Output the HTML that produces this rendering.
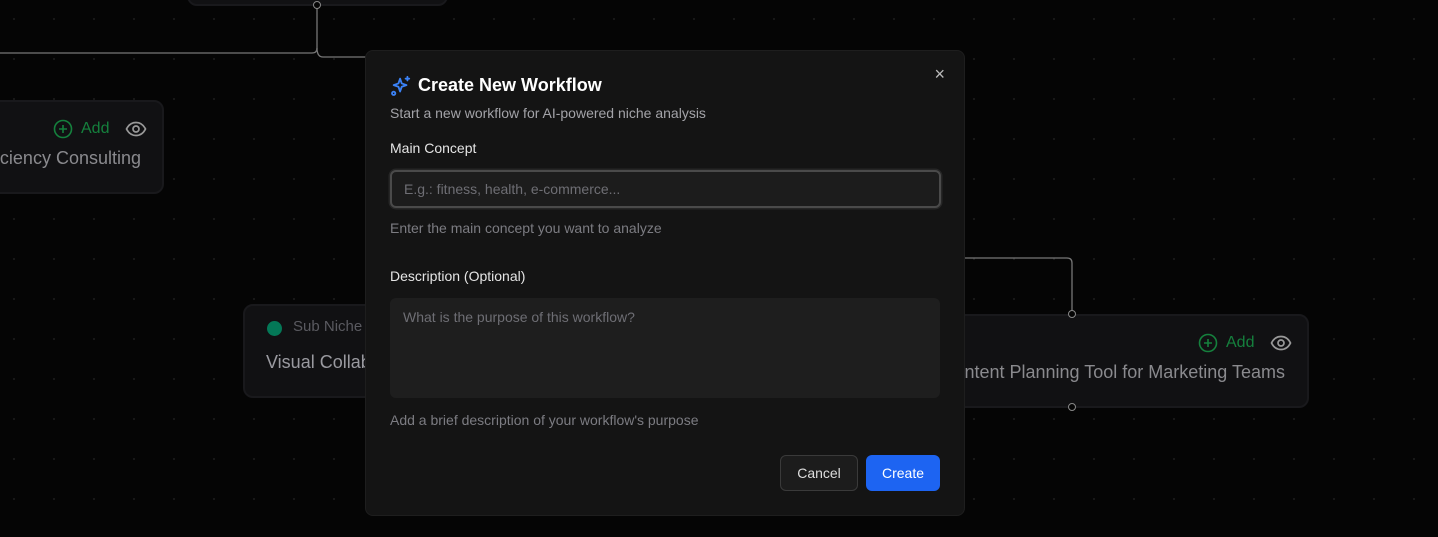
<!DOCTYPE html>
<html><head><style>
body{margin:0;width:1438px;height:537px;overflow:hidden;background:#050505;font-family:"Liberation Sans",sans-serif;position:relative}
.grid{position:absolute;inset:0;background-image:radial-gradient(circle,#222 0.7px,transparent 1.1px);background-size:40px 40px;background-position:-6px -1px}
.node{position:absolute;background:#111113;border:2px solid #19191c;border-radius:10px;box-sizing:border-box}
.add{position:absolute;color:#15803d;font-size:16px;display:flex;align-items:center;gap:8px}
.title{position:absolute;color:#8a8a8e;font-size:18px;white-space:nowrap}
.h{position:absolute;width:6px;height:6px;border:1.5px solid #888;border-radius:50%;background:#050505}
.modal{position:absolute;left:365px;top:50px;width:600px;height:466px;background:#141414;border:1px solid #1e1e1e;border-radius:8px;box-sizing:border-box}
.lbl{position:absolute;left:24px;color:#e5e5e5;font-size:14px}
.hint{position:absolute;left:24px;color:#7c7c82;font-size:14px}
</style></head><body>
<div class="grid"></div>
<svg width="1438" height="537" style="position:absolute;left:0;top:0">
<path d="M317 5 V48 Q317 53 312 53 H0" stroke="#777" fill="none" stroke-width="1.3"/>
<path d="M317 48 Q317 57 323 57 H366" stroke="#777" fill="none" stroke-width="1.3"/>
<path d="M965 258 H1067 Q1072 258 1072 263 V314" stroke="#777" fill="none" stroke-width="1.3"/>
</svg>
<div class="node" style="left:187px;top:-40px;width:261px;height:46px"></div>
<div class="h" style="left:313px;top:1px"></div>
<div class="node" style="left:-20px;top:100px;width:184px;height:94px">
<div class="add" style="left:71px;top:17px"><svg width="20" height="20" viewBox="0 0 20 20"><circle cx="10" cy="10" r="8.5" stroke="#15803d" stroke-width="1.6" fill="none"/><path d="M10 6v8M6 10h8" stroke="#15803d" stroke-width="1.6"/></svg>Add</div>
<svg style="position:absolute;left:143px;top:19px" width="22" height="16" viewBox="0 0 22 16"><path d="M1.5 8C4 3 8 1.5 11 1.5S18 3 20.5 8C18 13 14 14.5 11 14.5S4 13 1.5 8Z" stroke="#999" stroke-width="1.7" fill="none"/><circle cx="11" cy="8" r="3" stroke="#999" stroke-width="1.7" fill="none"/></svg>
<div class="title" style="right:21px;top:46px">ciency Consulting</div>
</div>
<div class="node" style="left:243px;top:304px;width:200px;height:94px">
<div style="position:absolute;left:22px;top:15px;width:15px;height:15px;border-radius:50%;background:#047857"></div>
<div style="position:absolute;left:48px;top:12px;color:#5a5a60;font-size:15px">Sub Niche</div>
<div class="title" style="left:21px;top:46px;color:#9a9aa0">Visual Collab</div>
</div>
<div class="node" style="left:900px;top:314px;width:409px;height:94px">
<div class="add" style="left:296px;top:17px"><svg width="20" height="20" viewBox="0 0 20 20"><circle cx="10" cy="10" r="8.5" stroke="#15803d" stroke-width="1.6" fill="none"/><path d="M10 6v8M6 10h8" stroke="#15803d" stroke-width="1.6"/></svg>Add</div>
<svg style="position:absolute;left:368px;top:19px" width="22" height="16" viewBox="0 0 22 16"><path d="M1.5 8C4 3 8 1.5 11 1.5S18 3 20.5 8C18 13 14 14.5 11 14.5S4 13 1.5 8Z" stroke="#999" stroke-width="1.7" fill="none"/><circle cx="11" cy="8" r="3" stroke="#999" stroke-width="1.7" fill="none"/></svg>
<div class="title" style="right:22px;top:46px">Content Planning Tool for Marketing Teams</div>
</div>
<div class="h" style="left:1068px;top:310px"></div>
<div class="h" style="left:1068px;top:403px"></div>
<div class="modal">
<svg style="position:absolute;left:24px;top:24px" width="22" height="22" viewBox="0 0 24 24" fill="none" stroke="#3b82f6" stroke-width="2" stroke-linejoin="round" stroke-linecap="round"><path d="M11 4 L12.8 9.2 L18 11 L12.8 12.8 L11 18 L9.2 12.8 L4 11 L9.2 9.2Z"/><path d="M19 2v4M17 4h4"/><circle cx="4" cy="20" r="1.8"/></svg>
<div style="position:absolute;left:52px;top:24px;color:#fff;font-size:18px;font-weight:bold">Create New Workflow</div>
<div style="position:absolute;right:19px;top:13px;color:#bbb;font-size:18px">×</div>
<div class="hint" style="top:54px;color:#a3a3a8">Start a new workflow for AI-powered niche analysis</div>
<div class="lbl" style="top:89px">Main Concept</div>
<div style="position:absolute;left:24px;top:119px;width:551px;height:38px;box-sizing:border-box;border:2px solid #4a4a4a;border-radius:6px;background:#1c1c1c;box-shadow:0 0 0 1.5px #262626;color:#6e6e74;font-size:14px;padding:9px 12px">E.g.: fitness, health, e-commerce...</div>
<div class="hint" style="top:169px">Enter the main concept you want to analyze</div>
<div class="lbl" style="top:217px">Description (Optional)</div>
<div style="position:absolute;left:24px;top:247px;width:550px;height:100px;box-sizing:border-box;border-radius:6px;background:#1e1e1e;color:#6e6e74;font-size:14px;padding:11px 13px">What is the purpose of this workflow?</div>
<div class="hint" style="top:361px">Add a brief description of your workflow's purpose</div>
<div style="position:absolute;left:414px;top:404px;width:78px;height:36px;box-sizing:border-box;border:1px solid #3a3a3a;border-radius:6px;background:#1c1c1c;color:#ddd;font-size:14px;text-align:center;line-height:34px">Cancel</div>
<div style="position:absolute;left:500px;top:404px;width:74px;height:36px;border-radius:6px;background:#1d64f2;color:#fff;font-size:14px;text-align:center;line-height:36px">Create</div>
</div>
</body></html>
